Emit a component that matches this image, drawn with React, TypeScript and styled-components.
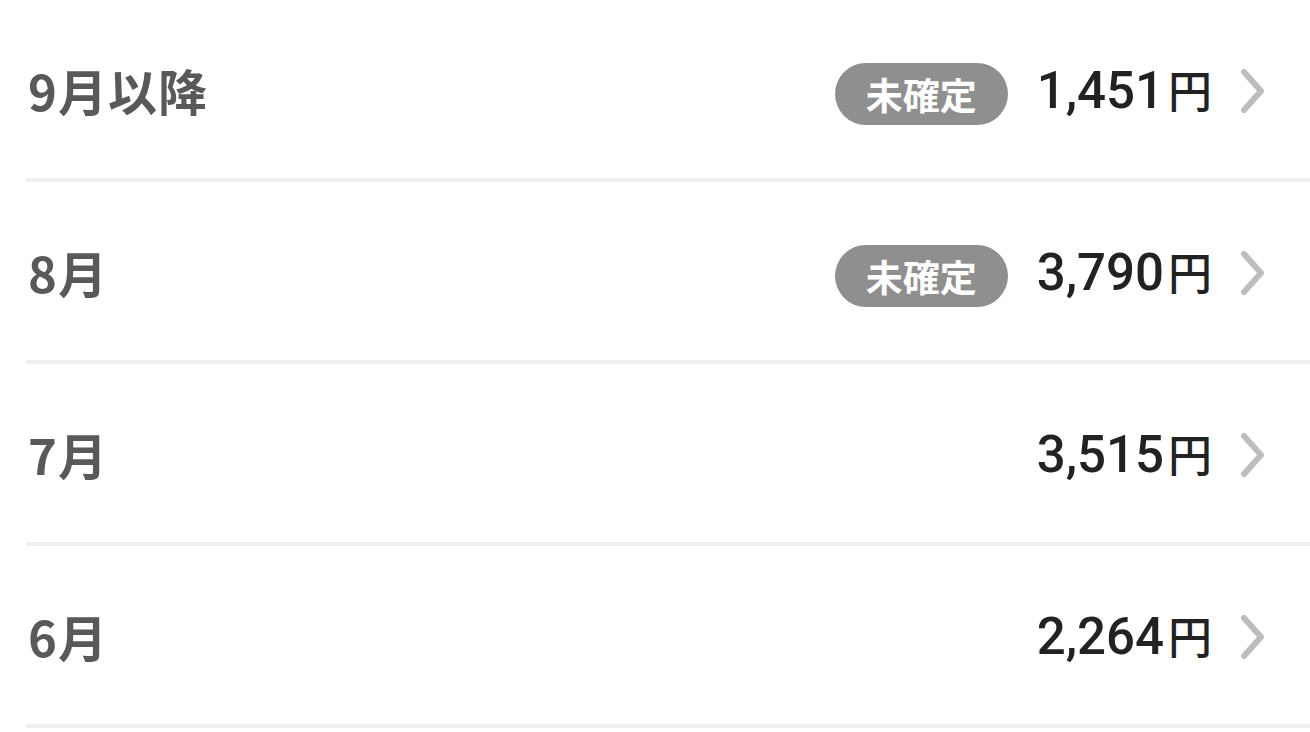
import React from "react";
import styled, { createGlobalStyle } from "styled-components";

const GlobalStyle = createGlobalStyle`
  html, body {
    margin: 0;
    padding: 0;
    background: #ffffff;
  }
  body {
    font-family: Roboto, "Noto Sans CJK JP", sans-serif;
    overflow: hidden;
  }
`;

const List = styled.ul`
  list-style-type: none;
  margin: 0;
  padding: 0 0 0 26px;
  width: 1284px;
`;

const Row = styled.li`
  display: flex;
  flex-flow: row nowrap;
  align-items: center;
  height: 178px;
  border-bottom: 4px solid #eeeeee;
  padding-right: 44px;
  cursor: pointer;
`;

const Month = styled.div`
  flex: 1;
  padding-left: 2px;
  font-family: "Noto Sans CJK JP", sans-serif;
  font-weight: 700;
  font-size: 49px;
  color: #595959;
  letter-spacing: 1px;
`;

const Badge = styled.span`
  display: inline-flex;
  align-items: center;
  justify-content: center;
  width: 173px;
  height: 62px;
  margin-top: 10px;
  border-radius: 31px;
  background: #8f8f8f;
  color: #ffffff;
  font-family: "Noto Sans CJK JP", sans-serif;
  font-weight: 700;
  font-size: 37px;
  margin-right: 29px;
`;

const Amount = styled.div`
  display: flex;
  align-items: baseline;
  font-family: Roboto, sans-serif;
  font-weight: 500;
  font-size: 51px;
  color: #222222;

  & > span {
    font-family: "Noto Sans CJK JP", sans-serif;
    font-weight: 500;
    font-size: 44px;
    margin-left: 4px;
  }
`;

const Chevron = styled.svg`
  width: 26px;
  height: 46px;
  margin-left: 28px;
  margin-top: 4px;
  flex-shrink: 0;
`;

interface Item {
  month: string;
  amount: string;
  pending: boolean;
}

const items: Item[] = [
  { month: "9月以降", amount: "1,451", pending: true },
  { month: "8月", amount: "3,790", pending: true },
  { month: "7月", amount: "3,515", pending: false },
  { month: "6月", amount: "2,264", pending: false },
];

const App: React.FC = () => {
  return (
    <>
      <GlobalStyle />
      <List>
        {items.map((item) => (
          <Row key={item.month}>
            <Month>{item.month}</Month>
            {item.pending && <Badge>未確定</Badge>}
            <Amount>
              {item.amount}
              <span>円</span>
            </Amount>
            <Chevron viewBox="0 0 26 46">
              <path
                d="M4 4 L21 23 L4 42"
                fill="none"
                stroke="#bdbdbd"
                strokeWidth="6"
                strokeLinecap="round"
                strokeLinejoin="round"
              />
            </Chevron>
          </Row>
        ))}
      </List>
    </>
  );
};

export default App;
